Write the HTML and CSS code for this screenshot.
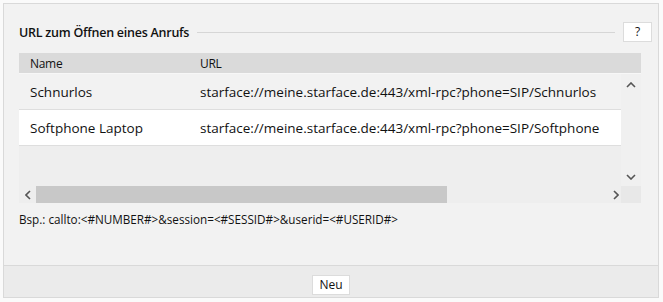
FILE: index.html
```html
<!DOCTYPE html>
<html lang="de">
<head>
	<meta charset="UTF-8">
	<title>URL zum Öffnen eines Anrufs</title>
	<link rel="stylesheet" href="styles.css">
</head>
<body>
<div class="panel">
	<div class="panel-body">
		<div class="legend">
			<span class="legend-title">URL zum Öffnen eines Anrufs</span>
			<span class="legend-line"></span>
			<button class="btn btn-help">?</button>
		</div>

		<div class="grid">
			<div class="grid-head">
				<div class="col-name">Name</div>
				<div class="col-url">URL</div>
			</div>
			<div class="grid-main">
				<div class="grid-rows">
					<div class="grid-row">
						<div class="col-name">Schnurlos</div>
						<div class="col-url">starface://meine.starface.de:443/xml-rpc?phone=SIP/Schnurlos</div>
					</div>
					<div class="grid-row selected">
						<div class="col-name">Softphone Laptop</div>
						<div class="col-url">starface://meine.starface.de:443/xml-rpc?phone=SIP/Softphone</div>
					</div>
				</div>
				<div class="vscroll">
					<svg width="10" height="6" viewBox="0 0 10 6"><path d="M1 5 L5 1 L9 5" fill="none" stroke="#555" stroke-width="1.6"/></svg>
					<svg width="10" height="6" viewBox="0 0 10 6"><path d="M1 1 L5 5 L9 1" fill="none" stroke="#555" stroke-width="1.6"/></svg>
				</div>
			</div>
			<div class="hscroll">
				<div class="hscroll-track">
					<svg class="arrow" width="6" height="10" viewBox="0 0 6 10"><path d="M5 1 L1 5 L5 9" fill="none" stroke="#555" stroke-width="1.6"/></svg>
					<div class="hscroll-thumb"></div>
					<svg class="arrow arrow-right" width="6" height="10" viewBox="0 0 6 10"><path d="M1 1 L5 5 L1 9" fill="none" stroke="#555" stroke-width="1.6"/></svg>
				</div>
				<div class="hscroll-corner"></div>
			</div>
		</div>

		<p class="hint">Bsp.: callto:&lt;#NUMBER#&gt;&amp;session=&lt;#SESSID#&gt;&amp;userid=&lt;#USERID#&gt;</p>
	</div>
	<div class="panel-footer">
		<button class="btn">Neu</button>
	</div>
</div>
</body>
</html>
```

FILE: styles.css
```css
* {
	box-sizing: border-box;
}

body {
	margin: 0;
	background: #fafafa;
	font-family: "Open Sans", "Noto Sans", sans-serif;
	color: #111;
}

.panel {
	width: 656px;
	height: 295px;
	margin: 3px 0 0 3px;
	border: 1px solid #d9d9d9;
	background: #f2f2f2;
	display: flex;
	flex-direction: column;
}

.panel-body {
	flex: 1;
	padding: 18px 6px 0 15px;
}

.legend {
	display: flex;
	align-items: center;
	height: 20px;
}

.legend-title {
	font-size: 12.5px;
	font-weight: 600;
	letter-spacing: -0.25px;
}

.legend-line {
	flex: 1;
	height: 1px;
	background: #d6d6d6;
	margin: 0 8px 0 8px;
}

.btn {
	height: 20px;
	padding: 0 6px;
	border: 1px solid #dcdcdc;
	background: #fff;
	font-family: inherit;
	font-size: 12px;
	color: #111;
	line-height: 18px;
}

.btn-help {
	width: 29px;
}

.grid {
	margin: 11px 11px 0 0;
	font-size: 13.5px;
}

.grid-head {
	display: flex;
	height: 21px;
	align-items: center;
	background: #dadada;
	border-bottom: 1px solid #f7f7f7;
}

.col-name {
	width: 181px;
	padding-left: 11px;
	flex-shrink: 0;
}

.col-url {
	white-space: nowrap;
}

.grid-head .col-name,
.grid-head .col-url {
	font-size: 12px;
	letter-spacing: -0.3px;
}

.grid-main {
	display: flex;
	height: 112px;
	background: #eeeeee;
}

.grid-rows {
	flex: 1;
	overflow: hidden;
}

.grid-row {
	display: flex;
	align-items: center;
	height: 36px;
	border-bottom: 1px solid #dedede;
	background: #f2f2f2;
}

.grid-row.selected {
	background: #fff;
}

.vscroll {
	width: 20px;
	display: flex;
	flex-direction: column;
	justify-content: space-between;
	align-items: center;
	padding: 8px 0 6px;
	background: #f0f0f0;
}

.hscroll {
	display: flex;
	height: 17px;
}

.hscroll-track {
	flex: 1;
	display: flex;
	align-items: center;
	background: #eeeeee;
	padding: 0 0 0 6px;
}

.hscroll-thumb {
	width: 411px;
	height: 17px;
	margin-left: 5px;
	background: #c8c8c8;
}

.arrow-right {
	margin-left: auto;
	margin-right: 2px;
}

.hscroll-corner {
	width: 20px;
	background: #e8e8e8;
}

.hint {
	margin: 8px 0 0;
	font-size: 11.7px;
}

.panel-footer {
	height: 32px;
	border-top: 1px solid #d9d9d9;
	background: #ebebeb;
	display: flex;
	justify-content: center;
	align-items: center;
	padding-top: 7px;
}
```
